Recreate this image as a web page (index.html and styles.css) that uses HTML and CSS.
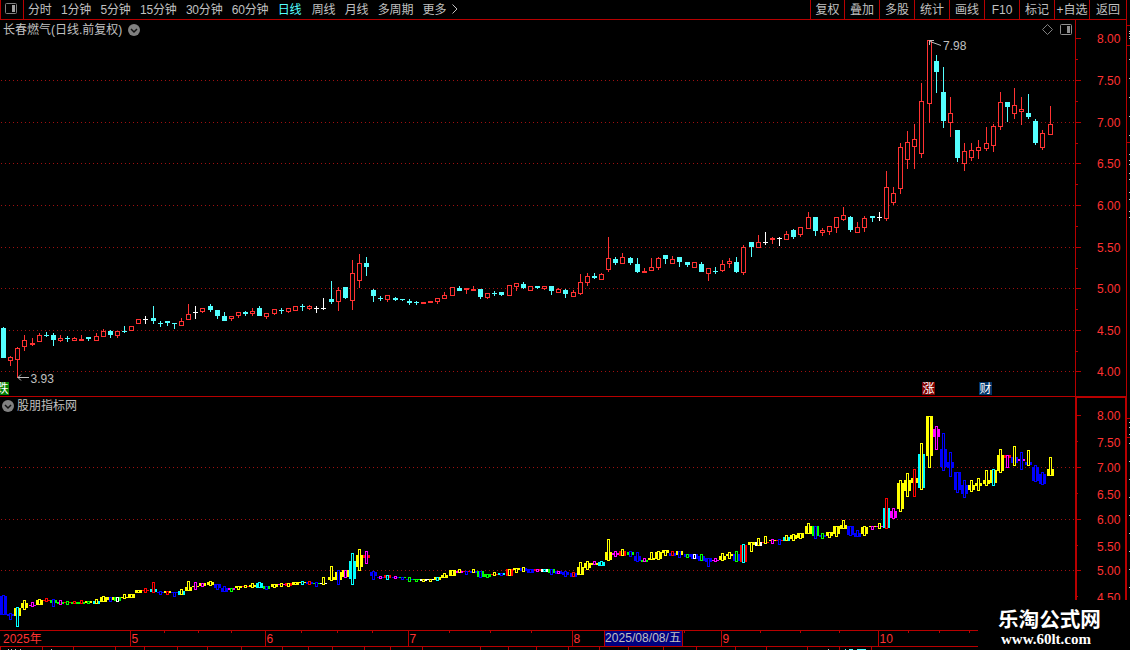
FILE: index.html
```html
<!DOCTYPE html>
<html lang="zh-CN">
<head>
  <meta charset="UTF-8">
  <meta name="viewport" content="width=device-width, initial-scale=1.0">
  <title>长春燃气 日线</title>
  <link rel="stylesheet" href="styles.css">
</head>
<body>
  <div class="main">
    <div class="toolbar">
      <div class="layout-btn">
        <svg class="icon" width="12" height="11" viewBox="0 0 12 11"><rect x="0.5" y="0.5" width="11" height="10" rx="1" fill="none" stroke="#808080"/><rect x="7" y="2" width="3" height="7" fill="#a0a0a0"/></svg>
      </div>
      <div class="periods">
        <span>分时</span>
        <span>1分钟</span>
        <span>5分钟</span>
        <span>15分钟</span>
        <span>30分钟</span>
        <span>60分钟</span>
        <span class="active">日线</span>
        <span>周线</span>
        <span>月线</span>
        <span>多周期</span>
        <span>更多</span>
        <svg class="more" width="6" height="10" viewBox="0 0 6 10"><path d="M0.5 0.5L5 5L0.5 9.5" fill="none" stroke="#c0c0c0"/></svg>
      </div>
      <div class="tools">
        <span>复权</span>
        <span>叠加</span>
        <span>多股</span>
        <span>统计</span>
        <span>画线</span>
        <span>F10</span>
        <span>标记</span>
        <span>+自选</span>
        <span>返回</span>
      </div>
    </div>

    <div class="panel price">
      <svg id="price" width="1127" height="376" viewBox="0 20 1127 376"></svg>
      <div class="title">
        <span>长春燃气(日线.前复权)</span>
        <svg width="12" height="12" viewBox="0 0 12 12"><circle cx="6" cy="6" r="6" fill="#808080"/><path d="M3 5L6 8L9 5" fill="none" stroke="#111" stroke-width="1.5"/></svg>
      </div>
      <div class="corner">
        <svg width="11" height="11" viewBox="0 0 11 11"><path d="M5.5 0.5L10.5 5.5L5.5 10.5L0.5 5.5Z" fill="none" stroke="#808080"/></svg>
        <svg width="12" height="11" viewBox="0 0 12 11"><rect x="0.5" y="0.5" width="11" height="10" rx="1" fill="none" stroke="#909090"/><rect x="7" y="2" width="3" height="7" fill="#909090"/></svg>
      </div>
      <span class="mark fall">跌</span>
      <span class="mark rise">涨</span>
      <span class="mark report">财</span>
    </div>

    <div class="panel indicator">
      <svg id="indicator" width="1127" height="234" viewBox="0 396 1127 234"></svg>
      <div class="title">
        <svg width="12" height="12" viewBox="0 0 12 12"><circle cx="6" cy="6" r="6" fill="#808080"/><path d="M3 5L6 8L9 5" fill="none" stroke="#111" stroke-width="1.5"/></svg>
        <span>股朋指标网</span>
      </div>
    </div>

    <svg id="timeline" width="1127" height="20" viewBox="0 630 1127 20"></svg>
  </div>
  <svg id="edge" width="3" height="650" viewBox="1127 0 3 650"></svg>

  <div class="watermark">
    <div class="name">乐淘公式网</div>
    <div class="url">www.60lt.com</div>
  </div>

  <script src="chart.js"></script>
</body>
</html>
```
FILE: styles.css
```css
body {
  margin: 0;
  width: 1130px;
  height: 650px;
  display: flex;
  overflow: hidden;
  background: #000;
  color: #c0c0c0;
  font-family: "Liberation Sans", "Noto Sans CJK SC", sans-serif;
  font-size: 12px;
  position: relative;
}

svg {
  display: block;
  flex: none;
}

.main {
  width: 1127px;
  flex: none;
}

.toolbar {
  display: flex;
  height: 20px;
  box-sizing: border-box;
  border: solid #b80000;
  border-width: 0 1px 1px 1px;
  line-height: 20px;
  white-space: nowrap;
}

.layout-btn {
  width: 22px;
  border-right: 1px solid #b80000;
}

.layout-btn .icon {
  margin: 3px 0 0 4px;
}

.periods {
  display: flex;
  flex: 1;
  gap: 9.4px;
  padding-left: 4px;
  letter-spacing: -0.2px;
}

.periods .active {
  margin-right: 1px;
  color: #54ffff;
}

.periods .more {
  margin: 4px 0 0 -4px;
}

.tools {
  display: flex;
}

.tools span {
  width: 34px;
  border-left: 1px solid #b80000;
  text-align: center;
}

.tools span:first-child {
  width: 33px;
}

.tools span:last-child {
  width: 36px;
}

.panel {
  position: relative;
}

.title {
  position: absolute;
  display: flex;
  align-items: center;
  line-height: 14px;
  white-space: nowrap;
}

.title span {
  padding-top: 1px;
}

.price .title {
  left: 3px;
  top: 2px;
  gap: 6px;
}

.indicator .title {
  left: 2px;
  top: 2px;
  gap: 3px;
}

.corner {
  position: absolute;
  left: 1042px;
  top: 4px;
  display: flex;
  gap: 7px;
}

.mark {
  position: absolute;
  top: 362px;
  width: 13px;
  height: 13px;
  line-height: 15px;
  text-align: center;
  color: #fff;
}

.fall {
  left: -4px;
  background: #008000;
}

.rise {
  left: 922px;
  background: #800000;
}

.report {
  left: 979px;
  background: #003468;
}

svg text {
  font-family: "Liberation Sans", "Noto Sans CJK SC", sans-serif;
  font-size: 12px;
}

/* site stamp over the lower right corner */
.watermark {
  position: absolute;
  left: 978px;
  top: 600px;
  width: 152px;
  height: 50px;
  background: #000;
  color: #fff;
  font-weight: bold;
}

.watermark .name {
  padding: 5px 0 0 20px;
  font-family: "Noto Sans CJK SC", sans-serif;
  font-size: 20.6px;
  line-height: 26px;
}

.watermark .url {
  padding-left: 23px;
  font-family: "Liberation Serif", serif;
  font-size: 15px;
  line-height: 16px;
}
```
FILE: chart.js
```js
const RED = '#ff3232';
const LINE = '#b80000';
const GRID = '#a01010';
const KIND = { r: RED, c: '#54ffff', w: '#ffffff' };
const COLORS = { y: '#ffff00', b: '#0000ff', m: '#ff00ff', c: '#00ffff', g: '#00ff00', r: '#ff0000', w: '#ffffff' };

// high, body top, body bottom, low, kind, indicator body + outline colours
const candles = `
327 328 358 358 c bb|356 357 361 366 r bb|347 348 360 378 r yc|335 340 347 351 r yy|338 343 345 346 r mm
333 335 342 342 r yy|332 335 336 337 c rr|333 335 340 346 c gb|335 338 341 342 r gm|336 338 339 342 c rg
337 338 341 341 r gr|335 339 341 341 r gr|337 337 339 341 c yg|333 336 341 341 r cy|329 331 337 337 r yy
330 331 335 338 c yb|331 331 336 338 r gw|326 331 332 333 c yy|326 326 331 331 r yy|319 319 324 324 r yy
316 319 320 324 w rr|306 318 321 324 c cr|321 323 324 327 c bb|321 321 323 326 c yr|323 323 324 329 c bb
318 321 326 326 r cy|304 314 320 320 r yy|306 312 313 319 w ym|308 308 312 313 r ym|304 306 310 312 c yy
310 310 316 319 c bb|312 316 321 321 c bb|316 316 319 321 r mg|312 312 316 318 r yy|311 312 314 316 c ry
308 311 314 316 r yy|306 308 316 316 c cc|313 313 317 319 r gb|309 309 314 315 r yy|308 310 311 314 c my
308 308 312 313 r ry|306 306 311 311 r yy|304 306 307 311 c yc|305 306 309 310 r br|306 308 309 313 w gb
298 308 309 310 w wy|281 299 302 304 c yy|287 290 302 311 r yb|287 287 298 299 c ym|260 273 301 310 r cc
254 263 281 288 r yy|257 263 267 276 c rm|289 290 296 302 c bb|296 298 299 301 c bm|295 295 300 302 r rc
297 298 300 301 c bm|299 299 300 301 c gb|299 301 303 305 c bg|301 302 303 305 c gg|302 302 304 304 r wy
301 301 303 303 r wy|298 298 302 304 r yc|292 295 299 299 r yy|287 287 296 296 r yy|286 288 291 291 c my
288 288 290 294 r rb|286 289 291 291 r by|289 289 297 299 c gb|293 293 298 299 r gg|291 293 294 296 c ry
292 292 295 296 c cb|285 285 296 296 r ry|283 283 287 291 r yy|282 284 288 289 c by|286 286 291 291 r bb
286 286 288 289 c rm|286 286 289 290 r wc|286 286 291 295 c gb|288 289 293 293 r bm|289 290 294 298 c bb
290 292 297 297 r br|274 282 294 295 r yy|273 276 283 286 r yy|273 276 278 279 c ym|273 274 280 280 r cc
237 258 270 272 r yy|257 259 263 265 c mm|253 257 264 264 r ry|257 258 263 265 c gb|258 264 272 273 c bb
268 271 273 273 r gm|258 267 271 271 r yy|257 258 268 270 r yy|255 255 259 264 c yy|256 259 264 264 r br
257 257 262 267 c yb|262 262 265 267 c bg|262 262 268 268 r bw|262 264 272 272 c bg|268 268 274 281 r bb
267 271 272 274 c mm|260 264 271 272 r yy|258 261 264 268 r yy|257 262 272 273 c bg|245 247 273 275 r rc
242 242 247 257 c yy|235 242 248 248 r wy|232 242 243 245 w ry|237 238 240 244 r ym|237 238 239 246 w rb
231 234 240 240 r cy|229 230 237 239 c yy|227 227 235 237 r yy|212 217 229 229 r yy|217 217 231 236 c gb
228 230 233 236 r bg|226 226 232 235 r yy|217 217 228 233 r yy|207 215 220 221 r yy|216 217 230 232 c bb
222 227 233 233 r bb|216 218 228 232 r yy|216 216 218 222 c ym|212 217 218 221 w my|171 187 219 221 r cr
187 193 203 205 r mm|143 147 189 194 r yy|131 142 160 169 r yy|124 139 147 169 r yr|83 101 154 158 r cy
40 40 104 123 r yy|55 61 72 93 c mm|67 92 121 128 c bb|97 113 123 137 r bb|130 130 158 162 c bb
143 151 164 171 r bb|143 150 158 161 r yy|140 147 151 159 r yy|127 143 149 151 r yy|124 126 146 152 r yc
92 102 127 130 r yy|102 102 107 122 c rm|88 105 114 119 r by|97 109 112 125 r mb|94 113 117 119 c by
119 121 143 145 c bb|130 133 148 150 r bb|106 124 135 135 r yy
`.trim().split(/[|\n]/).map(row => row.split(' '));

function rect(x, y, w, h, fill) {
  return `<rect x="${x}" y="${y}" width="${w}" height="${h}" fill="${fill}"/>`;
}

function box(x, y, w, h, stroke) {
  return `<rect x="${x + 0.5}" y="${y + 0.5}" width="${w - 1}" height="${h - 1}" fill="#000" stroke="${stroke}"/>`;
}

function text(x, y, value, fill) {
  return `<text x="${x}" y="${y}" fill="${fill}">${value}</text>`;
}

function dots(y) {
  return `<line x1="1" x2="1075" y1="${y + 0.5}" y2="${y + 0.5}" stroke="${GRID}" stroke-dasharray="1 3"/>`;
}

function centre(i) {
  return Math.floor(3.56 + 7.1192 * i);
}

function drawPrice() {
  let out = '';
  [80, 122, 163, 205, 247, 288, 330, 371].forEach(y => out += dots(y));

  candles.forEach((c, i) => {
    const [hi, top, bot, lo] = c.slice(0, 4).map(Number);
    const x = centre(i);
    const color = KIND[c[4]];
    out += rect(x, hi, 1, lo - hi, color);
    if (c[4] === 'r' && bot - top > 2) {
      out += box(x - 2, top, 5, bot - top, color);
    } else {
      out += rect(x - 2, top, 5, bot - top, color);
    }
  });

  // axis
  out += rect(1075, 20, 1, 376, LINE) + rect(1126, 20, 1, 376, LINE);
  [38, 80, 122, 163, 205, 247, 288, 330, 371].forEach((y, i) => {
    out += rect(1076, y, 5, 1, LINE);
    if (i < 8) out += rect(1076, y + 21, 2, 1, LINE);
    out += text(1097, y + 5, (8 - i * 0.5).toFixed(2), RED);
  });

  // highest and lowest price
  out += '<path d="M930 41.5L941 45.5M934 40.5H929.5V45" fill="none" stroke="#c0c0c0"/>';
  out += text(943, 50, '7.98', '#c0c0c0');
  out += '<path d="M18 377.5H29M21 374.5L18 377.5L21 380.5" fill="none" stroke="#c0c0c0"/>';
  out += text(30.5, 383, '3.93', '#c0c0c0');
  document.getElementById('price').innerHTML = out;
}

function drawIndicator() {
  const scale = y => Math.round(415 + (y - 38) * 0.6225);
  let out = rect(0, 396, 1127, 1, LINE) + rect(1075, 396, 52, 2, LINE);
  [467, 519, 570].forEach(y => out += dots(y));

  let outlines = '';
  candles.forEach((c, i) => {
    const [hi, top, bot, lo] = c.slice(0, 4).map(Number);
    const x = centre(i);
    const bodyTop = scale(top);
    const boxTop = scale(hi);
    out += rect(x - 3, bodyTop, 7, scale(bot - 1) + 1 - bodyTop, COLORS[c[5][0]]);
    outlines += box(x - 1, boxTop, 3, Math.max(3, scale(lo - 1) + 1 - boxTop), COLORS[c[5][1]]);
  });
  out += outlines;

  out += rect(1075, 396, 2, 204, LINE) + rect(1125, 396, 2, 204, LINE);
  [415, 442, 467, 494, 519, 546, 570, 597].forEach((y, i) => {
    out += i % 2 ? rect(1077, y - 1, 1, 1, LINE) : rect(1077, y, 4, 1, LINE);
    out += text(1097, y + 5, (8 - i * 0.5).toFixed(2), RED);
  });
  document.getElementById('indicator').innerHTML = out;
}

function drawTimeline() {
  let out = rect(0, 630, 978, 1, LINE) + rect(0, 646, 978, 1, LINE);
  [164, 198, 231, 301, 337, 372, 449, 490, 531, 684, 760, 800, 839, 908, 939, 969].forEach(x => {
    out += rect(x, 631, 1, 2, LINE);
  });
  [0, 42, 73, 115, 144, 177, 207, 241, 282, 308, 332, 364, 390, 422, 480, 508, 536, 568, 599, 628, 663, 696, 735, 766, 807, 839, 871].forEach(x => {
    out += rect(x, 647, 1, 3, LINE);
  });
  out += text(3, 643, '2025年', RED);
  [[130, 5], [265, 6], [408, 7], [572, 8], [721, 9], [878, 10]].forEach(([x, month]) => {
    out += rect(x, 631, 1, 15, LINE) + text(x + 1.5, 643, month, RED);
  });
  out += rect(604, 631, 79, 15, '#000080') + rect(604, 631, 1, 15, LINE) + rect(682, 631, 1, 15, LINE);
  out += `<text x="605" y="642" fill="#c0c0c0" textLength="76">2025/08/08/五</text>`;

  // top edge of the next row
  [8, 11, 15, 20, 51, 828].forEach(x => out += rect(x, 649, 1, 1, '#c0c0c0'));
  [[845, 1], [849, 4], [857, 9]].forEach(([x, w]) => out += rect(x, 649, w, 1, '#54ffff'));
  document.getElementById('timeline').innerHTML = out;
}

function drawEdge() {
  let out = '';
  [25, 45, 142, 418, 437].forEach(y => out += rect(1127, y, 3, 1, LINE));
  [31, 33, 36, 38, 59, 78, 97, 116, 135, 154, 160, 164, 173, 179, 192, 199, 211, 217, 422, 427, 434, 443, 461, 479, 497, 515, 533, 551, 569, 587].forEach(y => {
    out += rect(1129, y, 1, 1, '#c0c0c0');
  });
  document.getElementById('edge').innerHTML = out;
}

drawPrice();
drawIndicator();
drawTimeline();
drawEdge();
```
